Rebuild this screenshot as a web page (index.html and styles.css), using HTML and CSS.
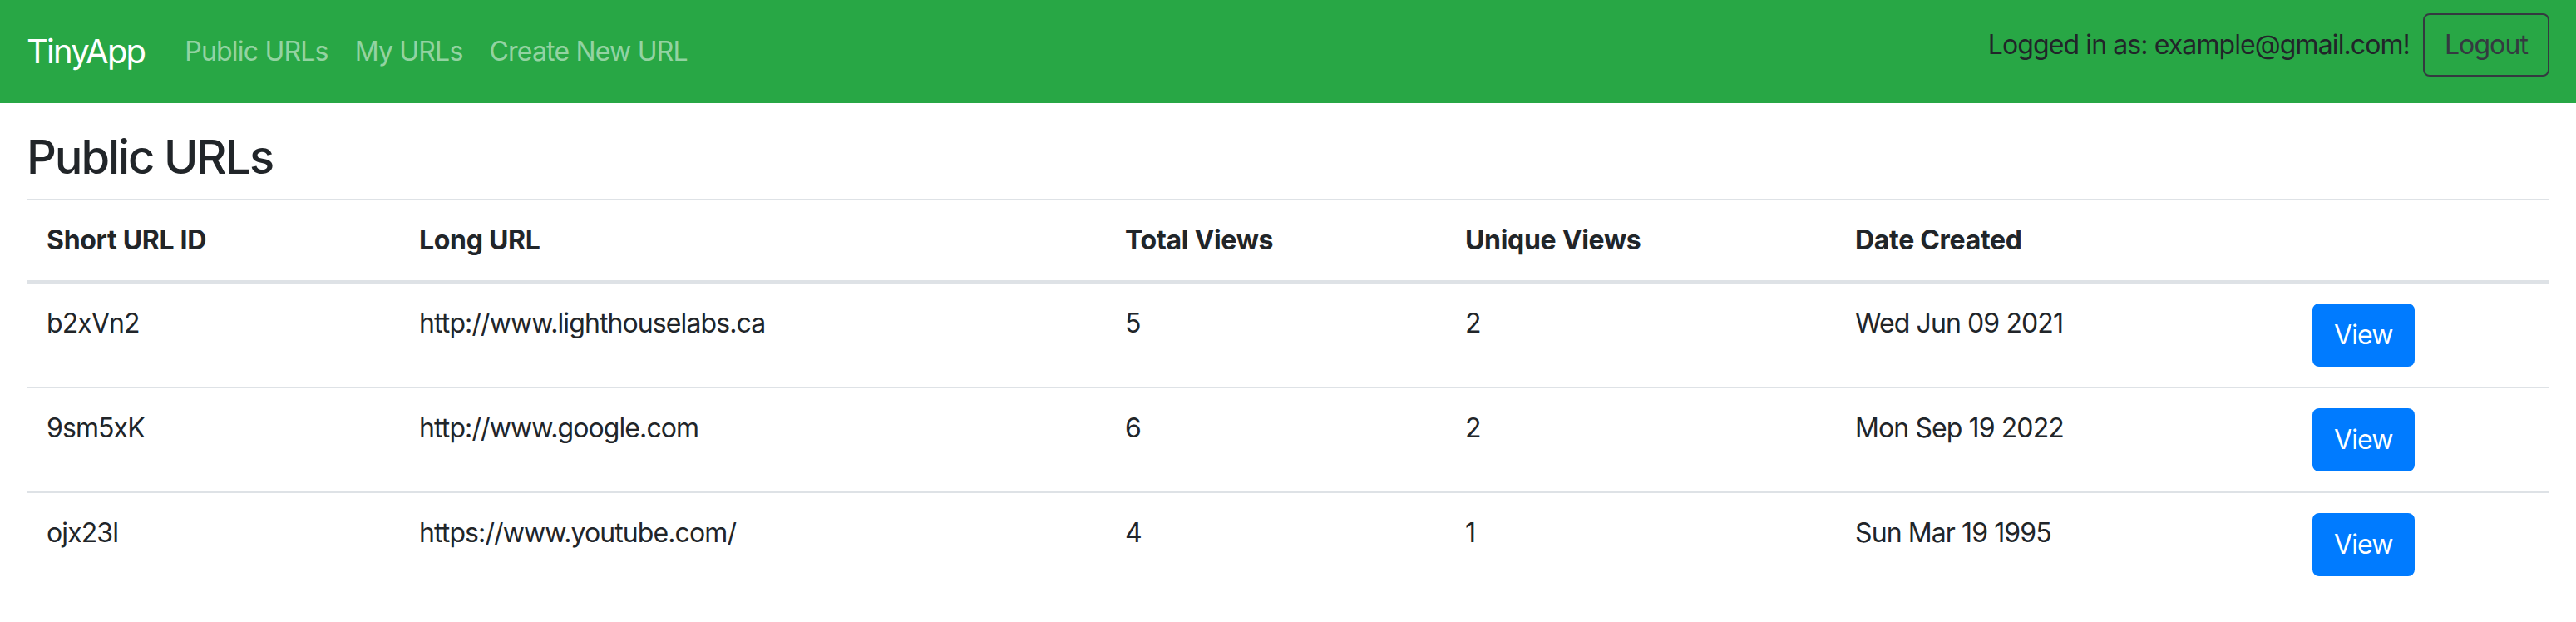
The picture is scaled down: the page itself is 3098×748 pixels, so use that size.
FILE: index.html
```html
<!DOCTYPE html>
<html lang="en">
<head>
<meta charset="utf-8">
<title>TinyApp</title>
<link rel="stylesheet" href="styles.css">
</head>
<body>
<nav class="navbar">
  <div class="nav-left">
    <a class="brand" href="#">TinyApp</a>
    <a class="nav-link" href="#">Public URLs</a>
    <a class="nav-link" href="#">My URLs</a>
    <a class="nav-link" href="#">Create New URL</a>
  </div>
  <form class="nav-right">
    <span class="nav-text">Logged in as: example@gmail.com!</span>
    <button type="button" class="btn btn-outline-dark">Logout</button>
  </form>
</nav>
<main class="container">
  <h3 class="title">Public URLs</h3>
  <table class="table">
    <colgroup>
      <col class="c1"><col class="c2"><col class="c3"><col class="c4"><col class="c5"><col class="c6">
    </colgroup>
    <thead>
      <tr>
        <th>Short URL ID</th>
        <th>Long URL</th>
        <th>Total Views</th>
        <th>Unique Views</th>
        <th>Date Created</th>
        <th></th>
      </tr>
    </thead>
    <tbody>
      <tr>
        <td>b2xVn2</td>
        <td>http://www.lighthouselabs.ca</td>
        <td>5</td>
        <td>2</td>
        <td>Wed Jun 09 2021</td>
        <td><a class="btn btn-primary" href="#">View</a></td>
      </tr>
      <tr>
        <td>9sm5xK</td>
        <td>http://www.google.com</td>
        <td>6</td>
        <td>2</td>
        <td>Mon Sep 19 2022</td>
        <td><a class="btn btn-primary" href="#">View</a></td>
      </tr>
      <tr>
        <td>ojx23l</td>
        <td>https://www.youtube.com/</td>
        <td>4</td>
        <td>1</td>
        <td>Sun Mar 19 1995</td>
        <td><a class="btn btn-primary" href="#">View</a></td>
      </tr>
    </tbody>
  </table>
</main>
</body>
</html>
```
FILE: styles.css
```css
* { box-sizing: border-box; }

html, body {
  margin: 0;
  padding: 0;
  background: #fff;
}

body {
  font-family: Inter, "Noto Sans", "Liberation Sans", sans-serif;
  font-size: 32px;
  line-height: 1.5;
  color: #212529;
  letter-spacing: -0.9px;
}

a { text-decoration: none; }

.navbar {
  display: flex;
  align-items: center;
  justify-content: space-between;
  background: #28a745;
  padding: 16px 32px;
}

.nav-left {
  display: flex;
  align-items: center;
}

.brand {
  color: #fff;
  font-size: 40px;
  line-height: 60px;
  padding: 10px 0;
  margin-right: 32px;
  letter-spacing: -1.8px;
}

.nav-link {
  color: rgba(255, 255, 255, 0.5);
  font-size: 32px;
  line-height: 48px;
  padding: 16px;
  letter-spacing: -0.8px;
}

.nav-right {
  display: flex;
  align-items: center;
  margin: 0 0 16px 0;
}

.nav-text {
  color: #212529;
  margin-right: 16px;
}

.btn {
  display: inline-block;
  font-family: inherit;
  font-size: 32px;
  line-height: 48px;
  padding: 12px 24px;
  border: 2px solid transparent;
  border-radius: 8px;
  background: transparent;
  letter-spacing: -0.9px;
}

.btn-outline-dark {
  color: #343a40;
  border-color: #343a40;
}

.btn-primary {
  color: #fff;
  background: #007bff;
  border-color: #007bff;
}

.container {
  padding: 0 32px;
  margin-top: 32px;
}

.title {
  font-size: 56px;
  font-weight: 500;
  line-height: 1.2;
  margin: 0 0 16px 0;
  letter-spacing: -2.1px;
}

.table {
  width: 100%;
  border-collapse: collapse;
  table-layout: fixed;
  margin-bottom: 32px;
}

.c1 { width: 448px; }
.c2 { width: 849px; }
.c3 { width: 409px; }
.c4 { width: 469px; }
.c5 { width: 550px; }
.c6 { width: 309px; }

.table th,
.table td {
  padding: 24px;
  text-align: left;
  vertical-align: top;
  border-top: 2px solid #dee2e6;
}

.table th {
  font-weight: 700;
  vertical-align: bottom;
  letter-spacing: -0.3px;
}

.table thead th {
  border-bottom: 4px solid #dee2e6;
}

.table tbody tr:first-child td {
  border-top: 4px solid #dee2e6;
}
```
